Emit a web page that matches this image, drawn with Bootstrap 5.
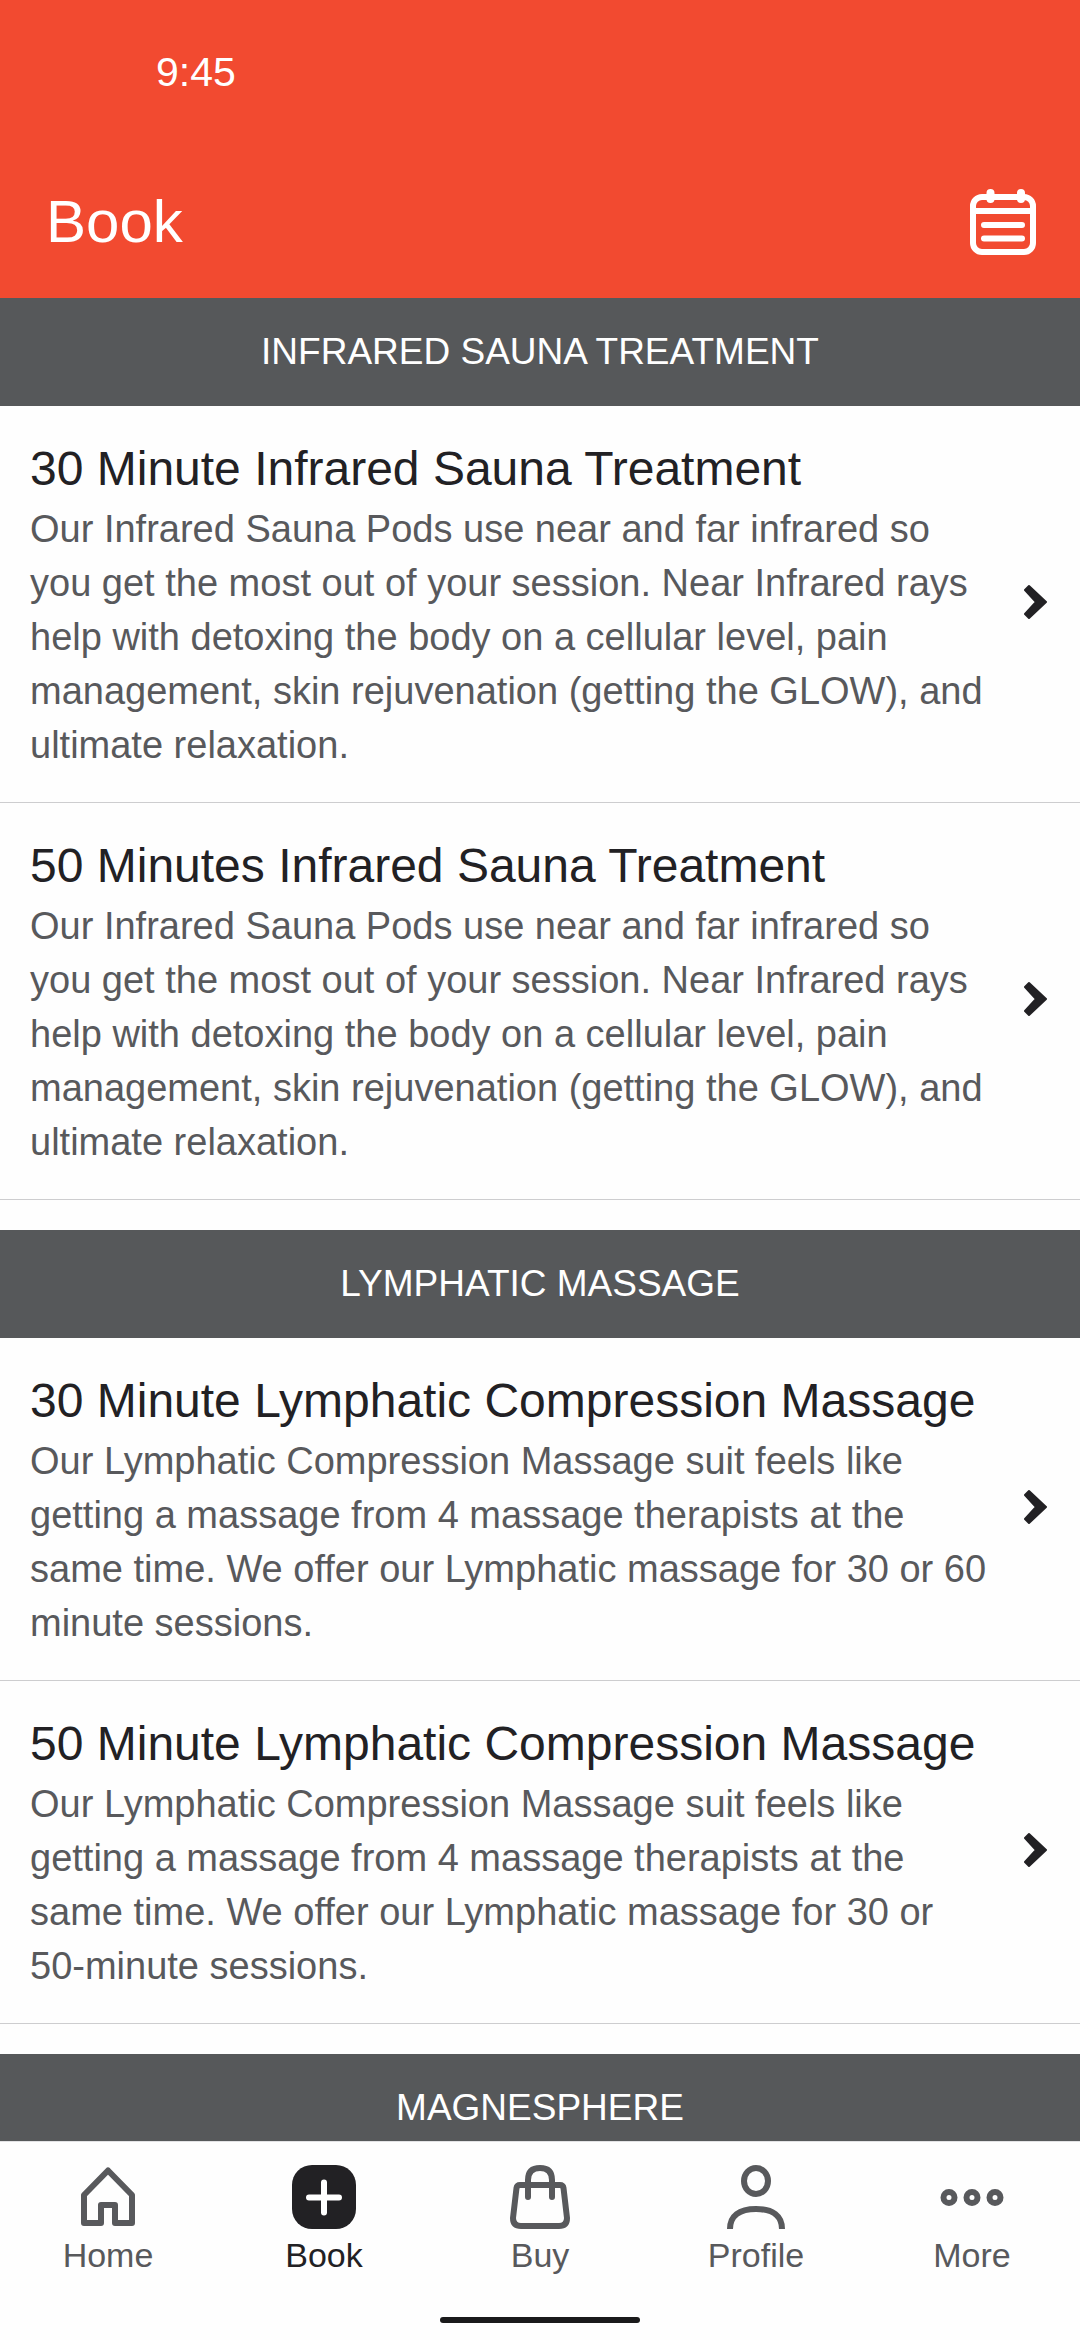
<!DOCTYPE html>
<html lang="en">
<head>
<meta charset="utf-8">
<meta name="viewport" content="width=device-width, initial-scale=1">
<title>Book</title>
<link href="https://cdn.jsdelivr.net/npm/bootstrap@5.3.0/dist/css/bootstrap.min.css" rel="stylesheet">
<style>
  body { font-family: "Liberation Sans", Arial, sans-serif; color: #222124; background: #fefefe; }
  .app-header { background: #f24a30; }
  .clock { font-size: 41px; line-height: 60px; padding: 42px 156px 0; }
  .title-row { padding: 74px 44px 30px 46px; }
  .screen-title { font-size: 60px; line-height: 92px; }
  .icon-btn { line-height: 0; }
  .service-list { overflow-y: auto; scrollbar-width: none; min-height: 0; }
  .service-list::-webkit-scrollbar { display: none; }
  .group-title { background: #56585a; font-size: 37px; line-height: 108px; }
  .service-group { margin-bottom: 30px; }
  .service { gap: 30px; padding: 30px 32px 30px 30px; border-bottom: 1px solid #cdcdcf; }
  .service-name { font-size: 48px; line-height: 66px; }
  .service-text { font-size: 38px; line-height: 54px; color: #58595c; }
  .chevron { fill: currentColor; stroke: currentColor; stroke-width: 2; stroke-linejoin: round; }
  .tab-bar { background: #fefefe; border-top: 1px solid #e2e2e4; padding: 23px 0 17px; }
  .tab-link { color: #58595c; font-size: 34px; line-height: 40px; gap: 6px; }
  .tab-link.active { color: #222124; }
  .home-bar { width: 200px; height: 6px; background: #1a1a1b; margin-top: 42px; }
  .line-icon { fill: none; stroke: currentColor; stroke-width: 6; stroke-linecap: round; stroke-linejoin: round; }
</style>
</head>
<body>
<div class="d-flex flex-column vh-100">
  <header class="app-header text-white">
    <div class="clock">9:45</div>
    <div class="title-row d-flex align-items-center justify-content-between">
      <h1 class="screen-title fw-normal m-0">Book</h1>
      <button type="button" class="icon-btn btn p-0 border-0 text-white" aria-label="My schedule">
        <svg class="line-icon" width="66" height="66" viewBox="0 0 66 66" aria-hidden="true">
          <rect x="3" y="8" width="60" height="55" rx="9"/>
          <path d="M5 22h56" stroke-linecap="butt"/>
          <path d="M14 36h38M14 49.500h38"/>
          <path d="M20.500 4v6M51 4v6" stroke-width="8"/>
        </svg>
      </button>
    </div>
  </header>

  <main class="service-list flex-grow-1">
    <section class="service-group">
      <h2 class="group-title fw-normal text-white text-center m-0">INFRARED SAUNA TREATMENT</h2>
      <a href="#infrared-30" class="service d-flex align-items-center text-decoration-none text-reset">
        <div class="flex-grow-1">
          <h3 class="service-name fw-normal m-0">30 Minute Infrared Sauna Treatment</h3>
          <p class="service-text m-0">Our Infrared Sauna Pods use near and far infrared so you get the most out of your session. Near Infrared rays help with detoxing the body on a cellular level, pain management, skin rejuvenation (getting the GLOW), and ultimate relaxation.</p>
        </div>
        <svg class="chevron flex-shrink-0" width="24" height="40" viewBox="0 0 24 40" aria-hidden="true"><path d="M5 2 22 18 5 34 1 30 12 18 1 6Z"/></svg>
      </a>
      <a href="#infrared-50" class="service d-flex align-items-center text-decoration-none text-reset">
        <div class="flex-grow-1">
          <h3 class="service-name fw-normal m-0">50 Minutes Infrared Sauna Treatment</h3>
          <p class="service-text m-0">Our Infrared Sauna Pods use near and far infrared so you get the most out of your session. Near Infrared rays help with detoxing the body on a cellular level, pain management, skin rejuvenation (getting the GLOW), and ultimate relaxation.</p>
        </div>
        <svg class="chevron flex-shrink-0" width="24" height="40" viewBox="0 0 24 40" aria-hidden="true"><path d="M5 2 22 18 5 34 1 30 12 18 1 6Z"/></svg>
      </a>
    </section>

    <section class="service-group">
      <h2 class="group-title fw-normal text-white text-center m-0">LYMPHATIC MASSAGE</h2>
      <a href="#lymphatic-30" class="service d-flex align-items-center text-decoration-none text-reset">
        <div class="flex-grow-1">
          <h3 class="service-name fw-normal m-0">30 Minute Lymphatic Compression Massage</h3>
          <p class="service-text m-0">Our Lymphatic Compression Massage suit feels like getting a massage from 4 massage therapists at the same time. We offer our Lymphatic massage for 30 or 60 minute sessions.</p>
        </div>
        <svg class="chevron flex-shrink-0" width="24" height="40" viewBox="0 0 24 40" aria-hidden="true"><path d="M5 2 22 18 5 34 1 30 12 18 1 6Z"/></svg>
      </a>
      <a href="#lymphatic-50" class="service d-flex align-items-center text-decoration-none text-reset">
        <div class="flex-grow-1">
          <h3 class="service-name fw-normal m-0">50 Minute Lymphatic Compression Massage</h3>
          <p class="service-text m-0">Our Lymphatic Compression Massage suit feels like getting a massage from 4 massage therapists at the same time. We offer our Lymphatic massage for 30 or 50-minute sessions.</p>
        </div>
        <svg class="chevron flex-shrink-0" width="24" height="40" viewBox="0 0 24 40" aria-hidden="true"><path d="M5 2 22 18 5 34 1 30 12 18 1 6Z"/></svg>
      </a>
    </section>

    <section>
      <h2 class="group-title fw-normal text-white text-center m-0">MAGNESPHERE</h2>
    </section>
  </main>

  <footer class="tab-bar">
    <nav class="row row-cols-5 g-0" aria-label="Main">
      <a href="#home" class="tab-link col d-flex flex-column align-items-center text-decoration-none">
        <svg class="line-icon" width="64" height="64" viewBox="0 0 64 64" aria-hidden="true"><path d="M8 58V30L32 5.500 56 30V58H39V40H25V58Z"/></svg>
        Home
      </a>
      <a href="#book" class="tab-link active col d-flex flex-column align-items-center text-decoration-none" aria-current="page">
        <svg width="64" height="64" viewBox="0 0 64 64" aria-hidden="true"><rect width="64" height="64" rx="20" fill="currentColor"/><path d="M32 17.500v30M17 32.500h30" stroke="#fff" stroke-width="6" stroke-linecap="round"/></svg>
        Book
      </a>
      <a href="#buy" class="tab-link col d-flex flex-column align-items-center text-decoration-none">
        <svg class="line-icon" width="64" height="64" viewBox="0 0 64 64" aria-hidden="true"><path d="M12 20H52Q55 20 55.500 23L59 53Q59 61 51 61H13Q5 61 5 53L8.500 23Q9 20 12 20ZM20 32V15Q20 3 32 3T44 15V32"/></svg>
        Buy
      </a>
      <a href="#profile" class="tab-link col d-flex flex-column align-items-center text-decoration-none">
        <svg class="line-icon" width="64" height="64" viewBox="0 0 64 64" aria-hidden="true"><ellipse cx="32" cy="16" rx="12" ry="13"/><path d="M6 64C6 51 15 44 32 44S58 51 58 64" stroke-linecap="butt"/></svg>
        Profile
      </a>
      <a href="#more" class="tab-link col d-flex flex-column align-items-center text-decoration-none">
        <svg class="line-icon" width="64" height="64" viewBox="0 0 64 64" aria-hidden="true"><circle cx="9" cy="32.500" r="5.500"/><circle cx="32" cy="32.500" r="5.500"/><circle cx="55" cy="32.500" r="5.500"/></svg>
        More
      </a>
    </nav>
    <div class="home-bar rounded-pill mx-auto"></div>
  </footer>
</div>
<script src="https://cdn.jsdelivr.net/npm/bootstrap@5.3.0/dist/js/bootstrap.bundle.min.js"></script>
</body>
</html>
